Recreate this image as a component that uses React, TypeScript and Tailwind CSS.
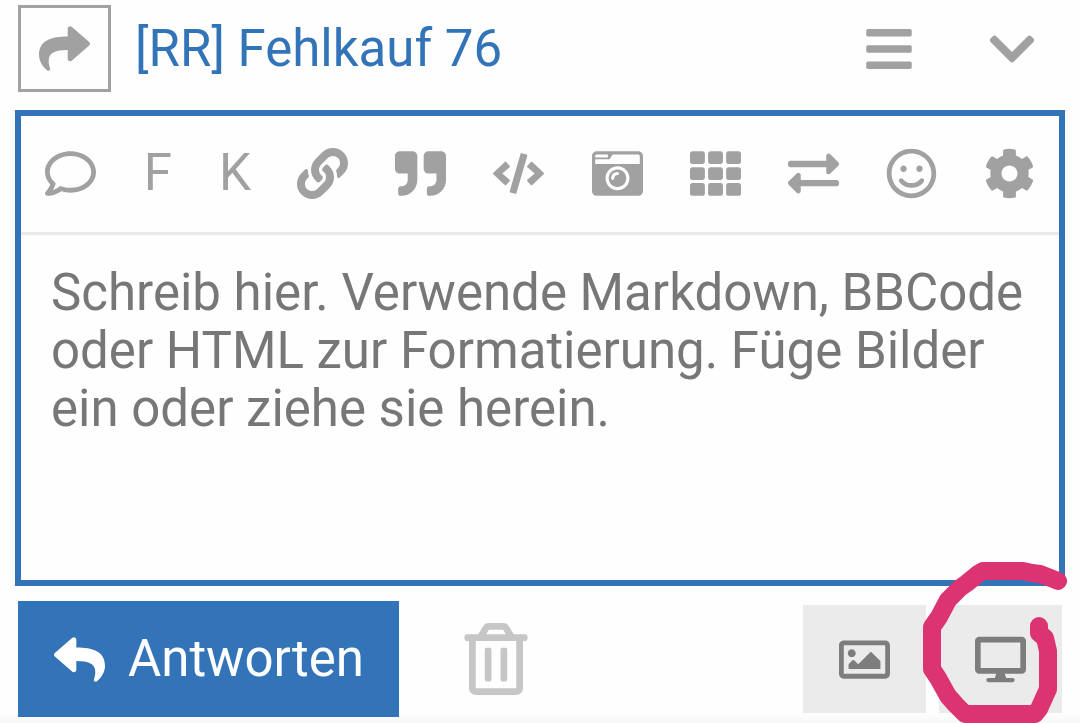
import { useState } from "react";
import type { ReactNode } from "react";
import {
  FaBars,
  FaCameraRetro,
  FaChevronDown,
  FaCode,
  FaCog,
  FaDesktop,
  FaExchangeAlt,
  FaLink,
  FaQuoteRight,
  FaRegComment,
  FaRegImage,
  FaRegSmile,
  FaRegTrashAlt,
  FaReply,
  FaShare,
  FaTh,
} from "react-icons/fa";

type Tool = {
  label: string;
  icon: ReactNode;
  narrow?: boolean;
};

const tools: Tool[] = [
  { label: "Zitat einfügen", icon: <FaRegComment /> },
  { label: "Fettgedruckt", icon: "F", narrow: true },
  { label: "Betonung", icon: "K", narrow: true },
  { label: "Link", icon: <FaLink /> },
  { label: "Zitatblock", icon: <FaQuoteRight /> },
  { label: "Vorformatierter Text", icon: <FaCode /> },
  { label: "Bild hochladen", icon: <FaCameraRetro /> },
  { label: "Tabelle", icon: <FaTh /> },
  { label: "Textrichtung", icon: <FaExchangeAlt /> },
  { label: "Emoji", icon: <FaRegSmile /> },
  { label: "Optionen", icon: <FaCog /> },
];

const Toolbar = () => (
  <div className="flex h-[119px] items-stretch border-b-3 border-[#e9e9e9] pb-[2px] text-[51px] text-[#a1a1a1]">
    {tools.map((tool) => (
      <button
        key={tool.label}
        type="button"
        aria-label={tool.label}
        className={
          tool.narrow
            ? "flex min-w-0 flex-[77] items-center justify-center"
            : "flex min-w-0 flex-[98] items-center justify-center"
        }
      >
        {tool.icon}
      </button>
    ))}
  </div>
);

// hand-drawn marker around the preview button
const Marker = () => (
  <svg
    className="pointer-events-none absolute -top-[45px] -left-[19px] h-[163px] w-[150px] max-w-none"
    viewBox="0 0 150 163"
    fill="none"
    stroke="#dc3372"
    strokeWidth="18"
    strokeLinecap="round"
    strokeLinejoin="round"
    aria-hidden="true"
  >
    <path d="M138 21L128 17L120 14L112 13L103 11H63L58 14L47 23L40 28L28 40L19 57L12 67V109L18 118L28 136L36 145L45 154H115L119 149L128 129V91L125 78L119 73V66" />
  </svg>
);

const App = () => {
  const [text, setText] = useState("");

  return (
    <main className="bg-[#fefefe] font-[Roboto,sans-serif]">
      <header className="flex items-center px-[18px] pt-[5px] pb-[18px] text-[#a1a1a1]">
        <button
          type="button"
          aria-label="Antwortart"
          className="flex h-[87px] w-[93px] items-center justify-center border-3 border-[#a1a1a1] text-[51px]"
        >
          <FaShare />
        </button>
        <h1 className="ml-6 text-[51px] leading-[60px] text-[#3374b9]">
          <a href="#thema">[RR] Fehlkauf 76</a>
        </h1>
        <div className="ml-auto flex items-center gap-[71px] pr-6 text-[52px]">
          <button type="button" aria-label="Werkzeugleiste umschalten">
            <FaBars />
          </button>
          <button type="button" aria-label="Minimieren">
            <FaChevronDown />
          </button>
        </div>
      </header>

      <section className="mx-[15px] border-6 border-[#3374b9]">
        <Toolbar />
        <textarea
          rows={5}
          aria-label="Beitrag"
          value={text}
          onChange={(e) => setText(e.target.value)}
          placeholder="Schreib hier. Verwende Markdown, BBCode oder HTML zur Formatierung. Füge Bilder ein oder ziehe sie herein."
          className="block w-full resize-none px-[30px] pt-[29px] pb-[26px] text-[51px] leading-[58px] text-[#222222] outline-none placeholder:text-[#777777]"
        />
      </section>

      <footer className="flex items-center bg-[linear-gradient(to_top,#f7f7f7,#fefefe_10px)] px-[18px] pt-[15px] pb-[6px]">
        <button
          type="button"
          className="flex h-[116px] items-center gap-[23px] bg-[#3374b9] pr-[35px] pl-9 text-[51px] text-white"
        >
          <FaReply />
          Antworten
        </button>
        <button
          type="button"
          aria-label="Verwerfen"
          className="ml-[61px] text-[72px] text-[#c6c6c6]"
        >
          <FaRegTrashAlt />
        </button>
        <div className="ml-auto flex gap-[13px] text-[51px] text-[#7d7d7d]">
          <button
            type="button"
            aria-label="Bild auswählen"
            className="flex h-[108px] w-[123px] items-center justify-center bg-[#ebebeb]"
          >
            <FaRegImage />
          </button>
          <div className="relative">
            <button
              type="button"
              aria-label="Vorschau"
              className="flex h-[108px] w-[123px] items-center justify-center bg-[#ebebeb]"
            >
              <FaDesktop />
            </button>
            <Marker />
          </div>
        </div>
      </footer>
    </main>
  );
};

export default App;
